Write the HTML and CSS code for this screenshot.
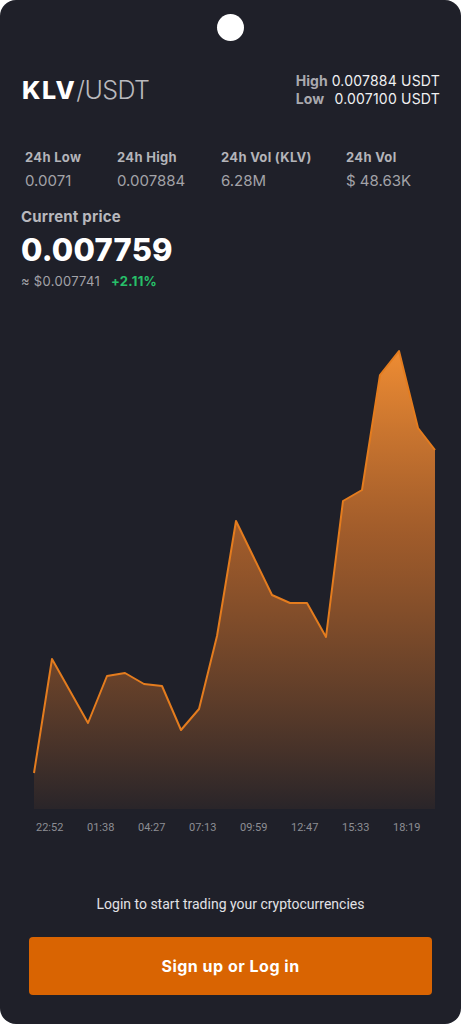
FILE: index.html
```html
<!DOCTYPE html>
<html lang="en">
<head>
<meta charset="UTF-8">
<meta name="viewport" content="width=device-width, initial-scale=1.0">
<title>KLV/USDT</title>
<link rel="stylesheet" href="styles.css">
</head>
<body>
<div class="card">
    <div class="notch"></div>

    <header class="pair-row">
        <h1 class="pair"><b>KLV</b><span>/USDT</span></h1>
        <div class="range">
            <span class="range-label">High</span><span>0.007884 USDT</span>
            <span class="range-label">Low</span><span>0.007100 USDT</span>
        </div>
    </header>

    <section class="stats">
        <div class="stat stat-low">
            <div class="stat-label">24h Low</div>
            <div class="stat-value">0.0071</div>
        </div>
        <div class="stat stat-high">
            <div class="stat-label">24h High</div>
            <div class="stat-value">0.007884</div>
        </div>
        <div class="stat stat-volk">
            <div class="stat-label">24h Vol (KLV)</div>
            <div class="stat-value">6.28M</div>
        </div>
        <div class="stat">
            <div class="stat-label">24h Vol</div>
            <div class="stat-value">$ 48.63K</div>
        </div>
    </section>

    <section class="price">
        <div class="price-label">Current price</div>
        <div class="price-value">0.007759</div>
        <div class="price-sub">≈ $0.007741 <span class="change">+2.11%</span></div>
    </section>

    <svg class="chart" viewBox="0 330 461 482" preserveAspectRatio="none">
        <defs>
            <linearGradient id="area" gradientUnits="userSpaceOnUse" x1="0" y1="350" x2="0" y2="810">
                <stop offset="0" stop-color="#ee8c33" stop-opacity="1"/>
                <stop offset="0.4" stop-color="#c46c2b" stop-opacity="0.78"/>
                <stop offset="1" stop-color="#e0782a" stop-opacity="0.05"/>
            </linearGradient>
        </defs>
        <polygon fill="url(#area)" points="34,808 34,772 52,658 88,722 107,675 125,672 144,683 162,685 181,729 199,708 217,635 236,520 272,594 290,602 307,602 326,636 343,500 362,489 380,374 399,350 418,427 435,449 435,808"/>
        <polyline fill="none" stroke="#e47c1e" stroke-width="2" stroke-linejoin="round" points="34,772 52,658 88,722 107,675 125,672 144,683 162,685 181,729 199,708 217,635 236,520 272,594 290,602 307,602 326,636 343,500 362,489 380,374 399,350 418,427 435,449"/>
    </svg>

    <div class="times">
        <span>22:52</span>
        <span>01:38</span>
        <span>04:27</span>
        <span>07:13</span>
        <span>09:59</span>
        <span>12:47</span>
        <span>15:33</span>
        <span>18:19</span>
    </div>

    <p class="login-note">Login to start trading your cryptocurrencies</p>
    <button class="cta">Sign up or Log in</button>
</div>
</body>
</html>
```

FILE: styles.css
```css
body {
  margin: 0;
  padding: 0;
  background-color: #fff;
  font-family: 'Inter', 'Open Sans', sans-serif;
}
.card {
  width: 461px;
  height: 1024px;
  background-color: #1f2029;
  border-radius: 16px;
  overflow: hidden;
  color: #fff;
}
.notch {
  width: 27px;
  height: 27px;
  border-radius: 50%;
  background: #fff;
  margin: 14px auto 0;
}
.pair-row {
  display: flex;
  justify-content: space-between;
  align-items: center;
  padding: 0 21px 0 22px;
  margin-top: 31px;
}
.pair {
  margin: 0;
  font-size: 25px;
  font-weight: 400;
}
.pair b {
  font-weight: 800;
  color: #fff;
  letter-spacing: 1.5px;
}
.pair span {
  font-weight: 300;
  color: #b9b9bd;
  letter-spacing: -0.6px;
}
.range {
  display: grid;
  grid-template-columns: auto auto;
  column-gap: 4px;
  font-size: 14px;
  line-height: 18px;
  color: #f0f0f2;
  letter-spacing: 0.2px;
}
.range span:nth-child(even) {
  text-align: right;
}
.range-label {
  font-weight: 700;
  color: #a9a9ae;
  letter-spacing: 0;
}
.stats {
  display: flex;
  padding: 0 0 0 25px;
  margin-top: 40px;
}
.stat-low { width: 92px; }
.stat-high { width: 104px; }
.stat-volk { width: 125px; }
.stat-label {
  font-size: 13px;
  font-weight: 700;
  color: #b4b4b9;
  line-height: 18px;
  letter-spacing: 0.3px;
}
.stat-value {
  font-size: 15px;
  color: #a3a3a8;
  line-height: 20px;
  margin-top: 5px;
}
.price {
  padding: 0 21px;
  margin-top: 17px;
}
.price-label {
  font-size: 15px;
  font-weight: 700;
  color: #b8b8bd;
  line-height: 18px;
  letter-spacing: 0.2px;
}
.price-value {
  font-size: 31px;
  font-weight: 800;
  line-height: 42px;
  margin-top: 3px;
  letter-spacing: 0.2px;
}
.price-sub {
  font-size: 13px;
  color: #a3a3a8;
  line-height: 18px;
  letter-spacing: 0.3px;
  margin-top: 1px;
}
.change {
  color: #27c06a;
  font-weight: 700;
  margin-left: 7px;
}
.chart {
  display: block;
  width: 461px;
  height: 482px;
  margin-top: 41px;
}
.times {
  display: flex;
  padding-left: 36px;
  font-family: 'Roboto', sans-serif;
  font-size: 11px;
  color: #8d8e94;
  margin-top: 8px;
}
.times span {
  width: 51px;
}
.login-note {
  margin: 62px 0 0;
  text-align: center;
  font-family: 'Roboto', sans-serif;
  font-size: 14px;
  color: #e2e2e6;
}
.cta {
  display: block;
  width: 403px;
  height: 58px;
  margin: 25px auto 0;
  border: none;
  border-radius: 4px;
  background-color: #d96402;
  color: #fff;
  font-family: 'Inter', sans-serif;
  font-size: 16px;
  font-weight: 700;
  letter-spacing: 0.5px;
}
```
